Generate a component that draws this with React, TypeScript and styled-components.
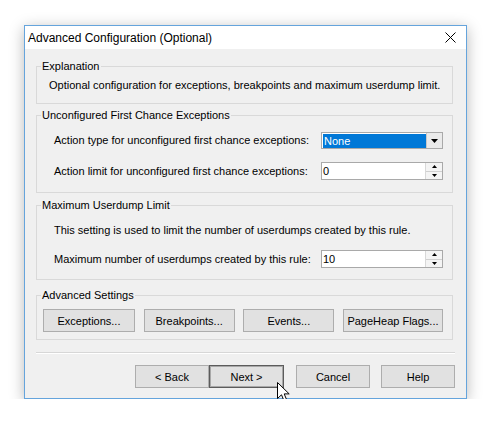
import styled, { createGlobalStyle } from "styled-components";

const GlobalStyle = createGlobalStyle`
  html, body {
    margin: 0;
    padding: 0;
    background: #ffffff;
  }
  body {
    font-family: "Liberation Sans", Arial, sans-serif;
    font-size: 11px;
    color: #000000;
  }
`;

interface IRowProps {
  label: string;
  children: React.ReactNode;
}

const FieldRow: React.FC<IRowProps> = ({ label, children }) => (
  <Row>
    <RowLabel>{label}</RowLabel>
    {children}
  </Row>
);

const SpinBox: React.FC<{ value: string }> = ({ value }) => (
  <Spin>
    <SpinValue>{value}</SpinValue>
    <SpinButtons>
      <SpinArrow>
        <svg width="5" height="3" viewBox="0 0 5 3">
          <path d="M2.5 0 L5 3 L0 3 Z" fill="#000" />
        </svg>
      </SpinArrow>
      <SpinArrow>
        <svg width="5" height="3" viewBox="0 0 5 3">
          <path d="M0 0 L5 0 L2.5 3 Z" fill="#000" />
        </svg>
      </SpinArrow>
    </SpinButtons>
  </Spin>
);

export default function App() {
  return (
    <Page>
      <GlobalStyle />
      <Window>
        <TitleBar>
          <Title>Advanced Configuration (Optional)</Title>
          <CloseBox>
            <svg width="11" height="11" viewBox="0 0 11 11">
              <path d="M0.5 0.5 L10.5 10.5 M10.5 0.5 L0.5 10.5" stroke="#000" strokeWidth="1" />
            </svg>
          </CloseBox>
        </TitleBar>
        <Body>
          <Group $gap={0}>
            <Legend>Explanation</Legend>
            <ExplainText>
              Optional configuration for exceptions, breakpoints and maximum userdump limit.
            </ExplainText>
          </Group>

          <Group $gap={5}>
            <Legend>Unconfigured First Chance Exceptions</Legend>
            <GroupContent $top={10} $bottom={12}>
              <FieldRow label="Action type for unconfigured first chance exceptions:">
                <Combo>
                  <ComboValue>None</ComboValue>
                  <ComboButton>
                    <svg width="7" height="4" viewBox="0 0 7 4">
                      <path d="M0 0 L7 0 L3.5 4 Z" fill="#000" />
                    </svg>
                  </ComboButton>
                </Combo>
              </FieldRow>
              <FieldRow label="Action limit for unconfigured first chance exceptions:">
                <SpinBox value="0" />
              </FieldRow>
            </GroupContent>
          </Group>

          <Group $gap={6}>
            <Legend>Maximum Userdump Limit</Legend>
            <GroupContent $top={12} $bottom={11}>
              <RowLabel>This setting is used to limit the number of userdumps created by this rule.</RowLabel>
              <FieldRow label="Maximum number of userdumps created by this rule:">
                <SpinBox value="10" />
              </FieldRow>
            </GroupContent>
          </Group>

          <Group $gap={9}>
            <Legend>Advanced Settings</Legend>
            <ButtonStrip>
              <PushButton $width={92}>Exceptions...</PushButton>
              <PushButton $width={91}>Breakpoints...</PushButton>
              <PushButton $width={91}>Events...</PushButton>
              <PushButton $width={100}>PageHeap Flags...</PushButton>
            </ButtonStrip>
          </Group>

          <Separator />

          <Footer>
            <Pair>
              <PushButton $width={74}>&lt; Back</PushButton>
              <PushButton $width={75} $default>
                Next &gt;
                <Cursor>
                  <svg width="13" height="20" viewBox="0 0 13 20">
                    <path
                      d="M0.5 0.5 L0.5 16.5 L4.5 12.8 L7 18.8 L9.6 17.7 L7.2 11.9 L12.2 11.9 Z"
                      fill="#fff"
                      stroke="#000"
                      strokeWidth="1"
                      strokeLinejoin="miter"
                    />
                  </svg>
                </Cursor>
              </PushButton>
            </Pair>
            <PushButton $width={74}>Cancel</PushButton>
            <HelpButton $width={74}>Help</HelpButton>
          </Footer>
        </Body>
      </Window>
    </Page>
  );
}

const Page = styled.div`
  padding: 25px 0 0 24px;
`;

const Window = styled.div`
  width: 443px;
  height: 374px;
  box-sizing: border-box;
  border: 1px solid #65a4dc;
  background: #f0f0f0;
  display: flex;
  flex-direction: column;
  box-shadow: 0 3px 14px rgba(0, 0, 0, 0.28);
`;

const TitleBar = styled.div`
  height: 23px;
  flex-shrink: 0;
  background: #ffffff;
  display: flex;
  align-items: center;
  justify-content: space-between;
  padding-left: 3px;
`;

const Title = styled.div`
  font-size: 12px;
  color: #000;
`;

const CloseBox = styled.div`
  width: 32px;
  height: 23px;
  display: flex;
  align-items: center;
  justify-content: center;
`;

const Body = styled.div`
  flex: 1;
  display: flex;
  flex-direction: column;
  padding: 11px 11px 9px 11px;
`;

const Group = styled.fieldset<{ $gap: number }>`
  margin: ${(p) => p.$gap}px 2px 0 0;
  padding: 0;
  min-width: 0;
  border: 1px solid #d9d9d9;
`;

const Legend = styled.legend`
  margin-left: 4px;
  padding: 0 1px;
  font-size: 11px;
  line-height: 13px;
`;

const ExplainText = styled.div`
  padding: 6px 8px 11px 12px;
  line-height: 13px;
  white-space: nowrap;
`;

const GroupContent = styled.div<{ $top: number; $bottom: number }>`
  display: flex;
  flex-direction: column;
  gap: 13px;
  padding: ${(p) => p.$top}px 9px ${(p) => p.$bottom}px 17px;
`;

const Row = styled.div`
  display: grid;
  grid-template-columns: 1fr 122px;
  align-items: center;
`;

const RowLabel = styled.div`
  line-height: 13px;
  white-space: nowrap;
`;

const Combo = styled.div`
  height: 17px;
  box-sizing: border-box;
  border: 1px solid #a9a9a9;
  background: #ffffff;
  display: flex;
  padding: 1px 0 0 1px;
`;

const ComboValue = styled.div`
  flex: 1;
  height: 14px;
  background: #0078d7;
  color: #ffffff;
  line-height: 14px;
  padding-left: 1px;
`;

const ComboButton = styled.div`
  width: 16px;
  height: 15px;
  margin-top: -1px;
  box-sizing: border-box;
  border-left: 1px solid #c8c8c8;
  background: #eaeaea;
  display: flex;
  align-items: center;
  justify-content: center;
`;

const Spin = styled.div`
  height: 18px;
  box-sizing: border-box;
  border: 1px solid #a9a9a9;
  background: #ffffff;
  display: flex;
`;

const SpinValue = styled.div`
  flex: 1;
  padding: 2px 0 0 1px;
  line-height: 12px;
`;

const SpinButtons = styled.div`
  width: 16px;
  display: flex;
  flex-direction: column;
  border-left: 1px solid #d8d8d8;
`;

const SpinArrow = styled.div`
  flex: 1;
  display: flex;
  align-items: center;
  justify-content: center;
  background: #f4f4f4;
  & + & {
    border-top: 1px solid #d0d0d0;
  }
`;

const ButtonStrip = styled.div`
  display: flex;
  justify-content: space-between;
  padding: 7px 9px 7px 6px;
`;

const PushButton = styled.div<{ $width: number; $default?: boolean }>`
  position: relative;
  width: ${(p) => p.$width}px;
  height: 23px;
  box-sizing: border-box;
  display: flex;
  align-items: center;
  justify-content: center;
  background: #e1e1e1;
  border: 1px solid ${(p) => (p.$default ? "#5c5c5c" : "#adadad")};
  box-shadow: ${(p) => (p.$default ? "inset 0 0 0 1px #a8a8a8" : "none")};
  color: #000;
`;

const HelpButton = styled(PushButton)`
  margin-left: -1px;
`;

const Separator = styled.div`
  margin-top: 12px;
  height: 1px;
  background: #d7d7d7;
  border-bottom: 1px solid #ffffff;
`;

const Footer = styled.div`
  margin-top: 11px;
  display: flex;
  justify-content: flex-end;
  gap: 12px;
`;

const Pair = styled.div`
  display: flex;
`;

const Cursor = styled.div`
  position: absolute;
  left: 67px;
  top: 16px;
  width: 13px;
  height: 20px;
  line-height: 0;
`;
